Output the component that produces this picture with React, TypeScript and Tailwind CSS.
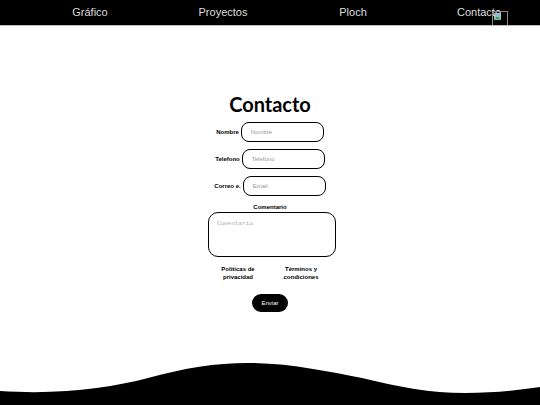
import React from 'react';

const navItems = [
  { label: 'Gráfico', w: 'w-[130px]' },
  { label: 'Proyectos', w: 'w-[136px]' },
  { label: 'Ploch', w: 'w-[124px]' },
];

const BrokenImage: React.FC = () => (
  <span className="absolute left-[77px] top-[7px] w-[16px] h-[16px] border border-[#8a8a8a]">
    <svg className="absolute left-[1px] top-[1px]" width="7" height="7" viewBox="0 0 16 16">
      <rect x="0.5" y="0.5" width="15" height="15" rx="2" fill="#f4f4f4" stroke="#bbb" />
      <rect x="2" y="2" width="12" height="12" fill="#7ec0ee" />
      <path d="M2 14 L6 8 L9 11 L11 9 L14 14 Z" fill="#3aa03a" />
    </svg>
  </span>
);

const Field: React.FC<{ label: string; placeholder: string }> = ({ label, placeholder }) => (
  <div className="flex items-center gap-[2px]">
    <span className="text-[6px] font-bold text-black">{label}</span>
    <input
      className="w-[83px] h-[20px] rounded-[8px] border-[1.5px] border-black px-[9px] text-[6px] outline-none placeholder:text-[#9a9a9a]"
      placeholder={placeholder}
    />
  </div>
);

export default function App() {
  return (
    <div className="h-[405px] flex flex-col bg-white overflow-hidden font-['Liberation_Sans',Arial,sans-serif]">
      {/* barra de navegación */}
      <header className="h-[26px] shrink-0 bg-black border-b border-[#bdbdbd] flex items-center pl-[25px] text-[11px] text-[#dcdcdc] overflow-hidden">
        {navItems.map((item) => (
          <span key={item.label} className={`${item.w} shrink-0 text-center`}>
            {item.label}
          </span>
        ))}
        <span className="relative w-[128px] shrink-0 text-center">
          Contacto
          <BrokenImage />
        </span>
      </header>

      <main className="flex-1 flex flex-col items-center pt-[66px]">
        <h1 className="text-[20px] leading-6 font-bold font-['Lato',sans-serif] text-black">Contacto</h1>

        <div className="flex flex-col items-center gap-[7px] mt-[6px]">
          <Field label="Nombre" placeholder="Nombre" />
          <Field label="Telefono" placeholder="Telefono" />
          <Field label="Correo e." placeholder="Email" />
        </div>

        <span className="mt-[7px] text-[6px] font-bold leading-[8px]">Comentario</span>
        <textarea
          className="mt-[1px] ml-[4px] w-[128px] h-[45px] rounded-[10px] border-[1.5px] border-black px-[8px] py-[6px] text-[6px] font-['Liberation_Mono',monospace] resize-none outline-none placeholder:text-[#b0b0b0]"
          placeholder="Comentario"
        />

        <div className="mt-[8px] flex gap-[28px] text-[6px] font-bold leading-[8px] text-center">
          <span className="w-[34px]">Políticas de privacidad</span>
          <span className="w-[36px]">Términos y condiciones</span>
        </div>

        <button className="mt-[13px] w-[36px] h-[18px] rounded-full bg-black text-white text-[6px]">
          Enviar
        </button>
      </main>

      {/* ola inferior */}
      <svg className="block w-full h-[45px] shrink-0" viewBox="0 0 540 45" preserveAspectRatio="none">
        <path
          d="M0 31 C60 35 110 28 148 18 C185 8 215 3 248 3 C290 3 330 12 362 18 C400 27 430 33 465 33 C495 33 520 30 540 27 L540 45 L0 45 Z"
          fill="#000"
        />
      </svg>
    </div>
  );
}
